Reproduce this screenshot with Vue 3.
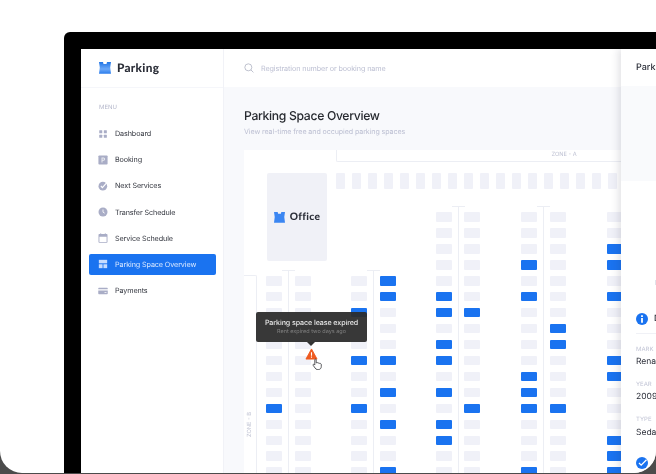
<script setup>
const nav = [
  { label: 'Dashboard', icon: 'grid' },
  { label: 'Booking', icon: 'p' },
  { label: 'Next Services', icon: 'check' },
  { label: 'Transfer Schedule', icon: 'clock' },
  { label: 'Service Schedule', icon: 'cal' },
  { label: 'Parking Space Overview', icon: 'layout', active: true },
  { label: 'Payments', icon: 'card' },
]
// Slot positions are relative to the map's corner (244,150 on the page)
const columns = [
  { x: 22, from: 0, blue: [8] },
  { x: 51, from: 0, blue: [] },
  { x: 107, from: 0, blue: [2, 5, 8] },
  { x: 136, from: 0, blue: [0, 1, 5, 7, 9, 12] },
  { x: 192, from: -4, blue: [1, 2, 4, 5, 7, 9, 10] },
  { x: 220, from: -4, blue: [2, 8] },
  { x: 277, from: -4, blue: [-1, 1, 6, 7, 8, 12] },
  { x: 306, from: -4, blue: [3, 4, 8] },
  { x: 363, from: -4, blue: [-2, -1, 1, 5, 6, 10, 11, 12] },
]
const slots = []
columns.forEach((c) => {
  for (let k = c.from; k <= 12; k++) {
    slots.push({ id: c.x + '-' + k, x: c.x, y: 126 + k * 15.95, blue: c.blue.includes(k) })
  }
})
const strip = Array.from({ length: 19 }, (_, i) => 91.5 + i * 16)
const dividers = [
  { x: 44, top: 120 },
  { x: 129, top: 120 },
  { x: 214, top: 56 },
  { x: 299, top: 56 },
]
</script>

<template>
  <div class="page">
    <div class="card">
      <div class="frame">
        <div class="screen">
          <aside class="sidebar">
            <div class="brand">
              <svg class="logo" viewBox="0 0 12 12"><defs><linearGradient id="lg" x1="0" y1="0" x2="0" y2="1"><stop offset="0" stop-color="#1f74e6"/><stop offset=".6" stop-color="#6ba8f8"/><stop offset="1" stop-color="#2a7cec"/></linearGradient></defs><path fill="url(#lg)" d="M0 0h4l.5 2h3l.5-2h4l-.8 5.500L12 11.800H0l.8-6.300z"/></svg>
              <span class="brand-name">Parking</span>
            </div>
            <div class="menu-label">MENU</div>
            <nav class="nav">
              <div v-for="n in nav" :key="n.label" class="nav-item" :class="{ active: n.active }">
                <svg class="nav-icon" viewBox="0 0 12 12">
                  <g v-if="n.icon === 'grid'"><rect x="1.500" y="1.500" width="3.600" height="3.600" rx=".4"/><rect x="7" y="1.500" width="3.600" height="3.600" rx=".4"/><rect x="1.500" y="7" width="3.600" height="3.600" rx=".4"/><rect x="7" y="7" width="3.600" height="3.600" rx=".4"/></g>
                  <g v-else-if="n.icon === 'p'"><rect x=".5" y=".5" width="11" height="11" rx="1"/><path fill="#fff" fill-rule="evenodd" opacity=".75" d="M4.200 3h2.500a1.900 1.900 0 010 3.800H5.400V9H4.200zm1.200 1.100v1.600h1.200a.8.8 0 000-1.600z"/></g>
                  <g v-else-if="n.icon === 'check'"><circle cx="5.800" cy="6.200" r="5.200"/><path d="M3.400 6l1.900 1.900L10.800 1.600" fill="none" stroke="#fff" stroke-width="1.300"/></g>
                  <g v-else-if="n.icon === 'clock'"><circle cx="6" cy="6" r="5.400"/><path d="M6 3v3.200l2 1.200" fill="none" stroke="#fff" stroke-width="1"/></g>
                  <g v-else-if="n.icon === 'cal'"><path fill-rule="evenodd" d="M2.800.3h1v1h4.400v-1h1v1h1.300c.5 0 .9.4.9.9v8.600c0 .5-.4.9-.9.9H1.500c-.5 0-.9-.4-.9-.9V2.200c0-.5.4-.9.9-.9h1.300zM1.700 4.400v6.300h8.600V4.400z"/></g>
                  <g v-else-if="n.icon === 'layout'"><rect x="1" y="1" width="10" height="4.200"/><rect x="1" y="6.300" width="4.500" height="4.700"/><rect x="6.500" y="6.300" width="4.500" height="4.700"/></g>
                  <g v-else><path d="M.3 3.200c0-.7.5-1.200 1.200-1.200h9c.7 0 1.200.5 1.200 1.200V4H.3z"/><path fill-rule="evenodd" d="M.3 5.500h11.400v3.300c0 .7-.5 1.200-1.200 1.200h-9c-.7 0-1.200-.5-1.200-1.200zM7.800 7.300v.9h2.400v-.9z"/></g>
                </svg>
                <span>{{ n.label }}</span>
              </div>
            </nav>
          </aside>

          <div class="main">
            <header class="topbar">
              <svg class="search" viewBox="0 0 12 12" fill="none" stroke="#a9adbf" stroke-width=".9"><circle cx="5.200" cy="5.200" r="4.200"/><path d="M8.300 8.300l3 3"/></svg>
              <span class="placeholder">Registration number or booking name</span>
            </header>
            <section class="content">
              <h1>Parking Space Overview</h1>
              <p class="sub">View real-time free and occupied parking spaces</p>
              <div class="map">
                <div class="zone zone-a"><span>ZONE - A</span></div>
                <div class="zone zone-b"><span>ZONE - B</span></div>
                <div class="office">
                  <svg class="office-logo" viewBox="0 0 12 12"><path fill="#3b86f2" d="M0 0h4l.5 2h3l.5-2h4l-.8 5.500L12 11.800H0l.8-6.300z"/></svg>
                  <span>Office</span>
                </div>
                <i v-for="x in strip" :key="x" class="strip" :style="{ left: x + 'px' }"></i>
                <i v-for="d in dividers" :key="d.x" class="divider" :style="{ left: d.x + 'px', top: d.top + 'px' }"></i>
                <i v-for="s in slots" :key="s.id" class="slot" :class="{ blue: s.blue }" :style="{ left: s.x + 'px', top: s.y + 'px' }"></i>
                <div class="tip">
                  <div class="tip-title">Parking space lease expired</div>
                  <div class="tip-sub">Rent expired two days ago</div>
                </div>
                <svg class="warn" viewBox="0 0 14 13"><path fill="#ef5a1f" stroke="#ef5a1f" stroke-linejoin="round" stroke-width="1" d="M7 1l6 11H1z"/><path fill="#fff" d="M6.400 4.500h1.200v4H6.400zM6.400 9.300h1.200v1.200H6.400z"/></svg>
                <svg class="hand" viewBox="0 0 12 14"><path fill="#fff" stroke="#2f3035" stroke-width=".9" stroke-linejoin="round" d="M3.200 1.800c0-1 1.600-1 1.600 0v3.600c.8-.5 1.800-.4 2.200.2.700-.3 1.500-.1 1.800.5.800-.2 1.800.2 1.800 1.200v2.400c0 1.800-1.200 3.300-3 3.300H6c-1.200 0-1.900-.7-2.500-1.700L1.300 8.200c-.5-.9.700-1.700 1.400-.9l.5.600z"/></svg>
              </div>
            </section>
          </div>

          <aside class="panel">
            <div class="panel-head">Parking Space Details</div>
            <div class="panel-hero"></div>
            <div class="panel-plate">Plate</div>
            <div class="panel-info">
              <svg class="info" viewBox="0 0 12 12"><circle cx="6" cy="6" r="6" fill="#1a73f0"/><path fill="#fff" d="M5.100 2.300h1.800v1.700H5.100zM5.100 5h1.800v4.700H5.100z"/></svg>
              <span>Details</span>
            </div>
            <div class="field"><div class="f-label">MARK</div><div class="f-value">Renault</div></div>
            <div class="field"><div class="f-label">YEAR</div><div class="f-value">2009</div></div>
            <div class="field"><div class="f-label">TYPE</div><div class="f-value">Sedan</div></div>
            <svg class="badge" viewBox="0 0 12 12"><circle cx="6" cy="6" r="6" fill="#1a73f0"/><path d="M3 6l2.200 2.200L10.500 2.800" fill="none" stroke="#fff" stroke-width="1.300"/></svg>
          </aside>
        </div>
      </div>
    </div>
  </div>
</template>

<style>
html, body { margin: 0; background: #4b4b4b; overflow: hidden; }
</style>

<style scoped>
.page { width: 656px; height: 474px; overflow: hidden; background: #4b4b4b; font-family: Inter, "Liberation Sans", sans-serif; text-rendering: geometricPrecision; }
.card { box-sizing: border-box; width: 656px; height: 473px; padding: 32px 0 0 64px; background: #fff; border-radius: 0 0 22px 22px; overflow: hidden; }
.frame { box-sizing: border-box; height: 441px; padding: 17px 0 0 17px; background: #000; border-radius: 6px 0 0 0; filter: blur(.35px); }
.screen { position: relative; display: flex; height: 424px; background: #fff; overflow: hidden; }
.sidebar { flex: 0 0 142px; border-right: 1px solid #f1f2f7; }
.brand { display: flex; align-items: center; gap: 6px; height: 38px; padding-left: 18px; border-bottom: 1px solid #f5f6fa; }
.logo { width: 12px; height: 12px; }
.brand-name { font-family: Lato, sans-serif; font-weight: 900; font-size: 11.800px; line-height: 12px; margin-top: -1px; color: #2b2e38; letter-spacing: .3px; }
.menu-label { margin: 16px 0 0 18px; font-size: 6px; line-height: 8px; color: #b3b6ca; }
.nav { display: flex; flex-direction: column; gap: 5.200px; margin: 11.500px 0 0 8px; }
.nav-item { display: flex; align-items: center; gap: 7px; width: 127px; height: 21px; padding: 0 0 1px 9px; box-sizing: border-box; border-radius: 2px; font-size: 7.200px; letter-spacing: -.1px; color: #33363f; }
.nav-item.active { background: #1a73f0; color: #dbe9ff; }
.nav-icon { width: 10px; height: 10px; fill: #a9adc6; flex: none; }
.nav-item.active .nav-icon { fill: #c6dcff; }
.main { flex: 1; display: flex; flex-direction: column; min-width: 0; }
.topbar { display: flex; align-items: center; height: 38px; padding-left: 20px; gap: 7px; flex: none; }
.search { width: 10px; height: 10px; }
.placeholder { font-size: 7.200px; letter-spacing: -.09px; color: #bcbfd2; }
.content { flex: 1; background: #f8f9fc; padding: 20px 0 0 20px; overflow: hidden; }
h1 { margin: 0; font-size: 12.200px; letter-spacing: -.33px; line-height: 17px; font-weight: 500; color: #26292f; }
.sub { margin: 3px 0 0; font-size: 7.100px; letter-spacing: -.08px; line-height: 10px; color: #bcbfd2; }
.map { position: relative; height: 332px; margin-top: 13px; background: #fff; }
.zone { position: absolute; box-sizing: border-box; border-color: #eceef4; border-style: solid; font-size: 5.700px; color: #bfc2d3; }
.zone-a { left: 91.500px; top: 0; right: 0; height: 11.500px; border-width: 0 0 1px 1px; border-bottom-left-radius: 2px; line-height: 10px; }
.zone-a span { position: absolute; left: 215px; top: 0; }
.zone-b { left: 0; top: 125px; width: 12.500px; bottom: 0; border-width: 1px 1px 0 0; border-top-right-radius: 2px; }
.zone-b span { position: absolute; left: 2px; top: 136px; writing-mode: vertical-rl; transform: rotate(180deg); }
.office { position: absolute; left: 23px; top: 23px; width: 60px; height: 88px; background: #f0f1f7; border-radius: 2px; display: flex; align-items: center; justify-content: center; gap: 5px; font-family: Lato, sans-serif; font-weight: 900; font-size: 10.200px; color: #2b2e38; letter-spacing: .3px; }
.office-logo { width: 11px; height: 11px; }
.strip { position: absolute; top: 23px; width: 9.500px; height: 16px; background: #f0f1f8; border-radius: 1px; }
.divider { position: absolute; width: 1px; bottom: 0; background: #eceef4; }
.divider::before { content: ""; position: absolute; left: -6px; top: 0; width: 13px; height: 1px; background: #eceef4; }
.slot { position: absolute; width: 16px; height: 9.500px; background: #f0f1f8; border-radius: 1px; }
.slot.blue { background: #1a73f0; }
.tip { position: absolute; left: 12px; top: 161.500px; box-sizing: border-box; width: 111px; height: 30px; padding-top: 6px; background: rgba(44, 44, 44, .94); border-radius: 2px; text-align: center; }
.tip::after { content: ""; position: absolute; left: 50.500px; top: 30px; border: 4px solid transparent; border-top-color: #333; border-bottom-width: 0; }
.tip-title { font-size: 7.100px; letter-spacing: -.08px; line-height: 9px; font-weight: 500; color: #e8e8e8; }
.tip-sub { margin-top: 1px; font-size: 5.500px; line-height: 8px; color: #808080; }
.warn { position: absolute; left: 60.500px; top: 198px; width: 13px; height: 12px; }
.hand { position: absolute; left: 67.500px; top: 207.500px; width: 10.500px; height: 12.500px; }
.panel { position: absolute; left: 540px; top: 0; right: 0; bottom: 0; background: #fff; box-shadow: -3px 0 7px rgba(30, 35, 60, .12); overflow: hidden; padding-left: 15px; white-space: nowrap; }
.panel-head { height: 37px; line-height: 37px; font-size: 9px; font-weight: 500; color: #2c2f3a; }
.panel-hero { position: absolute; left: 0; right: 0; top: 37px; height: 95px; background: #f9fafc; }
.panel-plate { position: absolute; left: 34px; top: 229px; font-size: 7px; color: #b9bccf; }
.panel-info { display: flex; align-items: center; gap: 6px; height: 12px; margin-top: 226.500px; padding-bottom: 8px; border-bottom: 1px solid #f0f1f6; font-size: 8.500px; font-weight: 500; color: #2c2f3a; }
.info { width: 12px; height: 12px; flex: none; }
.field { height: 35.300px; }
.panel-info + .field { margin-top: 12px; }
.f-label { font-size: 6px; line-height: 8px; color: #c0c3d4; }
.f-value { margin-top: 3.500px; font-size: 8.500px; line-height: 10px; color: #2c2f3a; }
.badge { position: absolute; left: 15px; top: 408px; width: 12px; height: 12px; }
</style>
